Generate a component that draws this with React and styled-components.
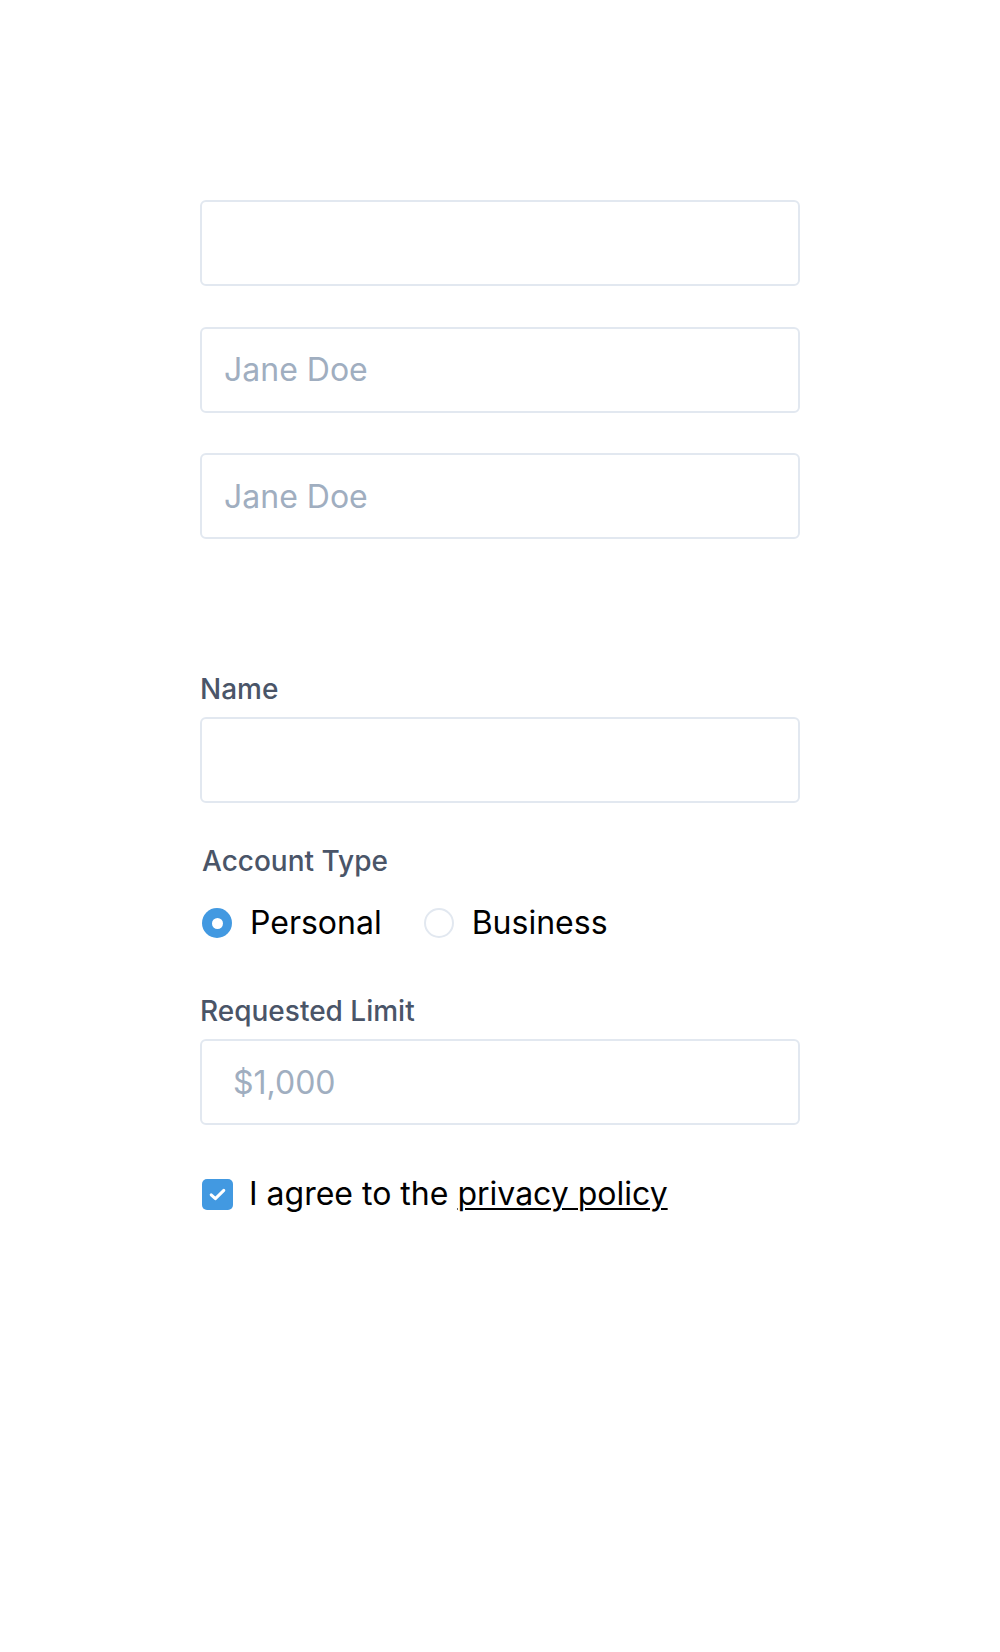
import styled, { createGlobalStyle } from "styled-components";
import { useState } from "react";

const GlobalStyle = createGlobalStyle`
  body {
    margin: 0;
    background: #ffffff;
    font-family: Inter, "Noto Sans", sans-serif;
  }
`;

export default function App() {
  const [accountType, setAccountType] = useState("personal");
  const [agreed, setAgreed] = useState(true);

  return (
    <>
      <GlobalStyle />
      <Page>
        <TopForm>
          <TextInput type="text" />
          <TextInput type="text" placeholder="Jane Doe" />
          <TextInput type="text" placeholder="Jane Doe" />
        </TopForm>

        <ApplyForm>
          <Field>
            <Label>Name</Label>
            <TextInput type="text" />
          </Field>

          <Field $spaced>
            <Label $inset>Account Type</Label>
            <RadioRow>
              <RadioOption onClick={() => setAccountType("personal")}>
                <RadioDot $checked={accountType === "personal"} />
                <OptionText>Personal</OptionText>
              </RadioOption>
              <RadioOption onClick={() => setAccountType("business")}>
                <RadioDot $checked={accountType === "business"} />
                <OptionText>Business</OptionText>
              </RadioOption>
            </RadioRow>
          </Field>

          <Field $wide>
            <Label>Requested Limit</Label>
            <TextInput type="text" placeholder="$1,000" $indent />
          </Field>

          <AgreeRow onClick={() => setAgreed(!agreed)}>
            <CheckBox $checked={agreed}>
              {agreed && (
                <svg width="17" height="13" viewBox="0 0 17 13" fill="none">
                  <path
                    d="M2.2 6.8 L6.4 10.6 L14.8 2.4"
                    stroke="#ffffff"
                    strokeWidth="3"
                    strokeLinecap="round"
                    strokeLinejoin="round"
                  />
                </svg>
              )}
            </CheckBox>
            <OptionText>
              I agree to the <PolicyLink href="#">privacy policy</PolicyLink>
            </OptionText>
          </AgreeRow>
        </ApplyForm>
      </Page>
    </>
  );
}

const Page = styled.div`
  width: 600px;
  margin: 0 auto;
  padding-top: 200px;
`;

const TopForm = styled.div`
  display: flex;
  flex-direction: column;
  gap: 40.5px;
`;

const ApplyForm = styled.div`
  display: flex;
  flex-direction: column;
  margin-top: 134px;
`;

const Field = styled.div`
  display: flex;
  flex-direction: column;
  gap: 12px;
  margin-top: ${(p) => (p.$spaced ? "42px" : p.$wide ? "52px" : "0")};
`;

const Label = styled.label`
  font-size: 28px;
  line-height: 32px;
  font-weight: 500;
  color: #4a5568;
  padding-left: ${(p) => (p.$inset ? "2px" : "0")};
`;

const TextInput = styled.input`
  box-sizing: border-box;
  width: 100%;
  height: 86px;
  padding: 0 22px 0 ${(p) => (p.$indent ? "31px" : "22px")};
  border: 2px solid #e2e8f0;
  border-radius: 6px;
  background: #ffffff;
  font-family: Inter, "Noto Sans", sans-serif;
  font-size: 32px;
  color: #1a202c;
  outline: none;

  &::placeholder {
    color: #a0aec0;
  }
`;

const RadioRow = styled.div`
  display: flex;
  align-items: center;
  gap: 42px;
  height: 40px;
  margin-top: 14px;
  padding-left: 2px;
`;

const RadioOption = styled.div`
  display: flex;
  align-items: center;
  gap: 18px;
  cursor: pointer;
`;

const RadioDot = styled.span`
  box-sizing: border-box;
  width: 30px;
  height: 30px;
  border-radius: 50%;
  display: flex;
  align-items: center;
  justify-content: center;
  background: ${(p) => (p.$checked ? "#4299e1" : "#ffffff")};
  border: ${(p) => (p.$checked ? "none" : "2px solid #e2e8f0")};

  &::after {
    content: "";
    display: ${(p) => (p.$checked ? "block" : "none")};
    width: 11px;
    height: 11px;
    border-radius: 50%;
    background: #ffffff;
  }
`;

const OptionText = styled.span`
  font-size: 32px;
  line-height: 40px;
  color: #000000;
`;

const AgreeRow = styled.div`
  display: flex;
  align-items: center;
  gap: 16px;
  height: 40px;
  margin-top: 49px;
  padding-left: 2px;
  cursor: pointer;
`;

const CheckBox = styled.span`
  width: 31px;
  height: 31px;
  border-radius: 5px;
  display: flex;
  align-items: center;
  justify-content: center;
  background: ${(p) => (p.$checked ? "#4299e1" : "#ffffff")};
  border: ${(p) => (p.$checked ? "none" : "2px solid #e2e8f0")};
`;

const PolicyLink = styled.a`
  color: #000000;
  text-decoration: underline;
  text-decoration-thickness: 2px;
  text-underline-offset: 3px;
`;
